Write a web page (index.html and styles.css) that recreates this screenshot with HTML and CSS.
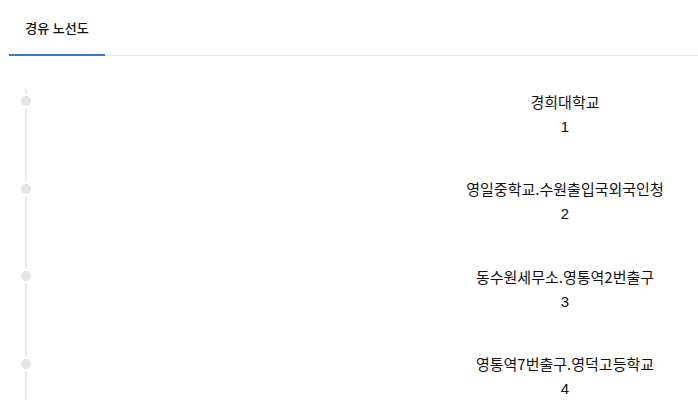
FILE: index.html
```html
<!DOCTYPE html>
<html lang="ko">
<head>
    <meta charset="UTF-8">
    <meta name="viewport" content="width=device-width, initial-scale=1.0">
    <title>경유 노선도</title>
    <link rel="stylesheet" href="styles.css">
</head>
<body>
    <div class="tabs">
        <div class="tab active">경유 노선도</div>
    </div>

    <div class="timeline">
        <div class="item">
            <div class="rail"><span class="seg top"></span><span class="dot"></span><span class="seg bottom"></span></div>
            <div class="content">
                <div class="name">경희대학교</div>
                <div class="num">1</div>
            </div>
        </div>
        <div class="item">
            <div class="rail"><span class="seg top"></span><span class="dot"></span><span class="seg bottom"></span></div>
            <div class="content">
                <div class="name">영일중학교.수원출입국외국인청</div>
                <div class="num">2</div>
            </div>
        </div>
        <div class="item">
            <div class="rail"><span class="seg top"></span><span class="dot"></span><span class="seg bottom"></span></div>
            <div class="content">
                <div class="name">동수원세무소.영통역2번출구</div>
                <div class="num">3</div>
            </div>
        </div>
        <div class="item">
            <div class="rail"><span class="seg top"></span><span class="dot"></span><span class="seg bottom"></span></div>
            <div class="content">
                <div class="name">영통역7번출구.영덕고등학교</div>
                <div class="num">4</div>
            </div>
        </div>
    </div>
</body>
</html>
```

FILE: styles.css
```css
body {
    margin: 0;
    font-family: "Noto Sans CJK KR", "Noto Sans", sans-serif;
    color: #111;
    background: #fff;
    height: 400px;
    overflow: hidden;
}
.tabs {
    display: flex;
    margin-left: 9px;
    border-bottom: 1px solid #e6e6e6;
}
.tab {
    width: 96px;
    height: 56px;
    display: flex;
    align-items: center;
    justify-content: center;
    font-size: 13px;
    font-weight: 500;
    color: #111;
    box-sizing: border-box;
}
.tab.active {
    border-bottom: 2px solid #2b7de9;
    margin-bottom: -1px;
}
.timeline {
    padding-top: 32.5px;
    height: 310px;
    overflow: hidden;
}
.item {
    display: flex;
    height: 87.67px;
}
.rail {
    width: 10px;
    margin-left: 21px;
    display: flex;
    flex-direction: column;
    align-items: center;
}
.seg {
    width: 2px;
    background: #ebebeb;
}
.seg.top {
    height: 5.5px;
    margin-bottom: 2px;
}
.seg.bottom {
    flex: 1;
    margin-top: 2px;
}
.dot {
    width: 10px;
    height: 10px;
    border-radius: 50%;
    background: #e3e5ea;
}
.content {
    flex: 1;
    padding-left: 401px;
    text-align: center;
    font-size: 15px;
    line-height: 25px;
    color: #111;
}
.num {
    font-family: "Liberation Sans", "Noto Sans CJK KR", sans-serif;
}
```
